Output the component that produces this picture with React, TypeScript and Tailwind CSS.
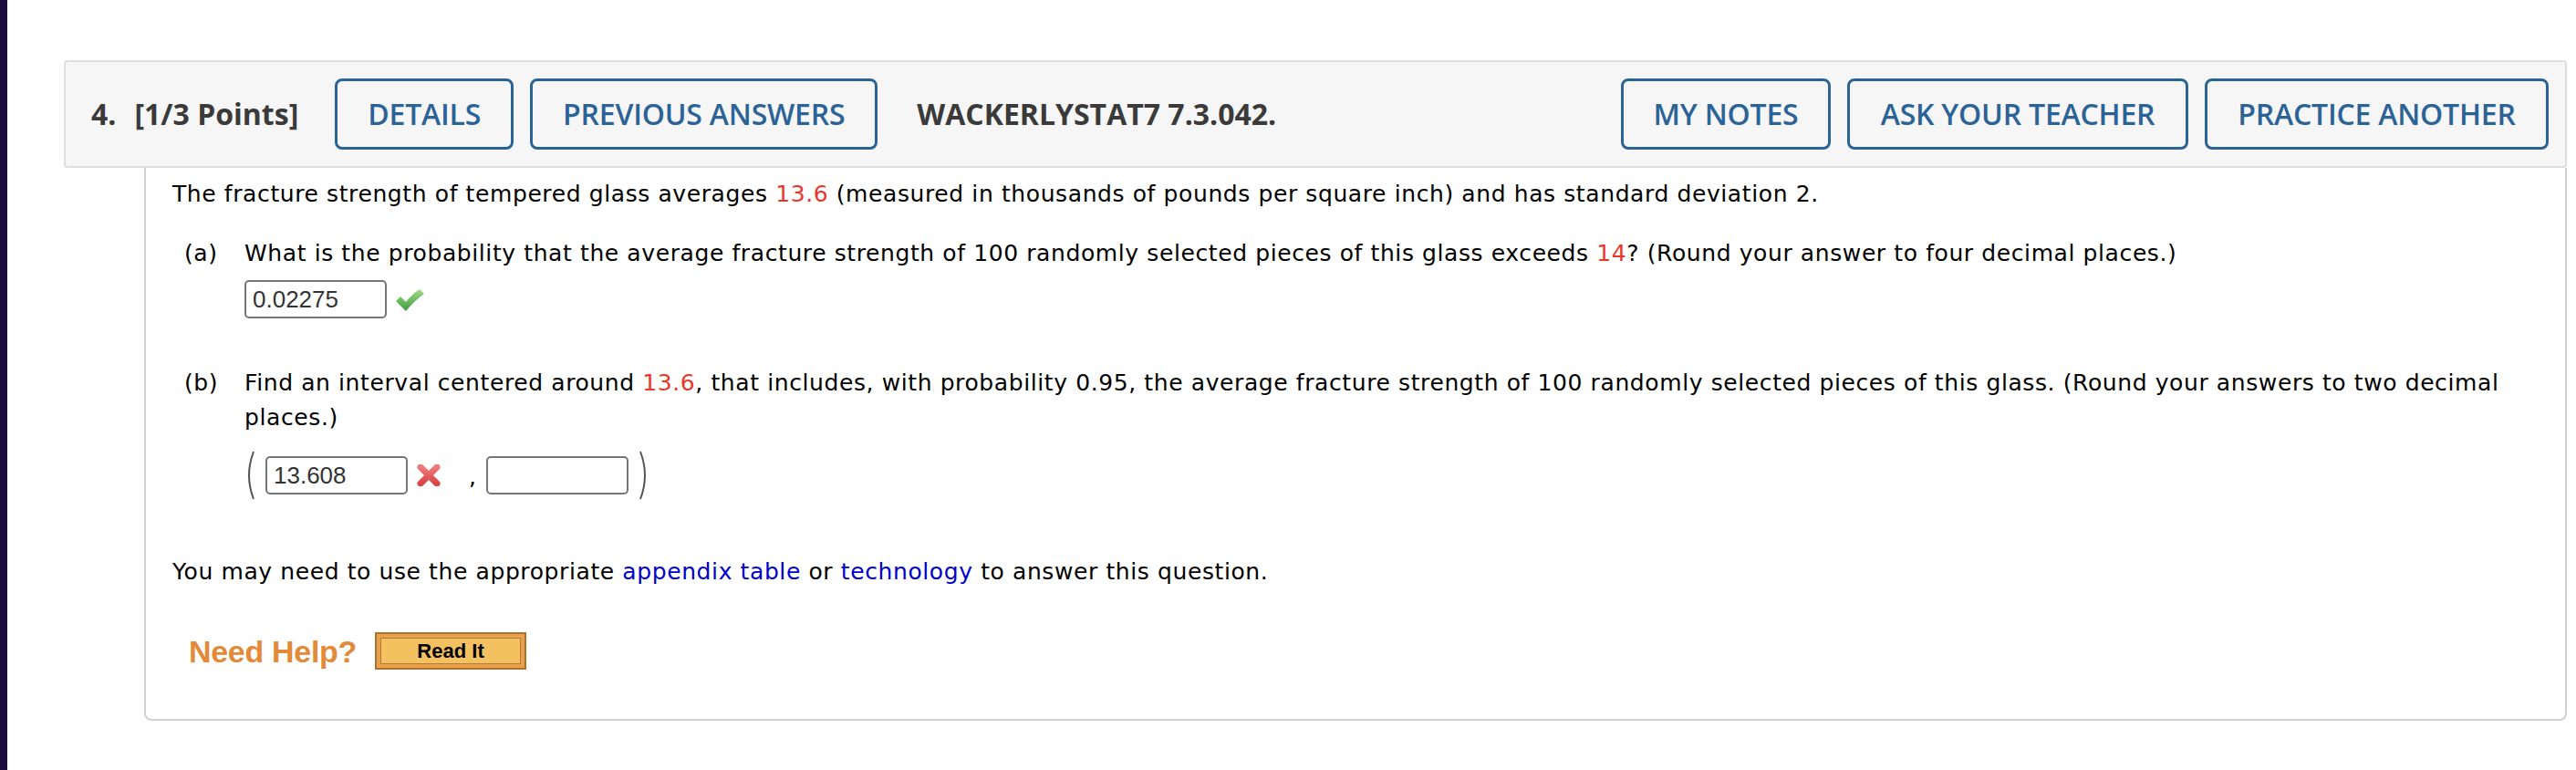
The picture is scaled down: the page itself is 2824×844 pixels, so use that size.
import React from "react";

const body = { fontFamily: '"DejaVu Sans", Verdana, sans-serif' };
const head = { fontFamily: '"Open Sans", "Liberation Sans", sans-serif' };
const arial = { fontFamily: '"Liberation Sans", Arial, sans-serif' };

function HeadButton({ label, w }: { label: string; w: string }) {
  return (
    <div
      className={`${w} h-[78px] shrink-0 border-[3px] border-[#2c6397] rounded-[8px] flex items-center justify-center text-[32px] font-semibold text-[#2c6397] tracking-[-0.2px]`}
      style={head}
    >
      {label}
    </div>
  );
}

function Check() {
  return (
    <svg width="31" height="24" viewBox="0 0 31 24">
      <defs>
        <linearGradient id="cg" x1="0" y1="0" x2="0" y2="1">
          <stop offset="0" stopColor="#9fdc86" />
          <stop offset="1" stopColor="#3f9b3c" />
        </linearGradient>
      </defs>
      <path d="M0 13 L5 8 L11 14 Q18 5 26 0 L31 5 Q20 13 11 24 Z" fill="url(#cg)" />
    </svg>
  );
}

function Cross() {
  return (
    <svg width="26" height="24" viewBox="0 0 26 24">
      <defs>
        <linearGradient id="xg" x1="0" y1="0" x2="0" y2="1">
          <stop offset="0" stopColor="#f07a7a" />
          <stop offset="1" stopColor="#d94444" />
        </linearGradient>
      </defs>
      <path d="M4 3 L22 21 M22 3 L4 21" stroke="url(#xg)" strokeWidth="7" strokeLinecap="round" fill="none" />
    </svg>
  );
}

function Paren({ right }: { right?: boolean }) {
  return (
    <svg width="13" height="56" viewBox="0 0 13 56">
      <path
        d={right ? "M3 2 Q13 28 3 54" : "M10 2 Q0 28 10 54"}
        stroke="#555555"
        strokeWidth="2"
        fill="none"
      />
    </svg>
  );
}

function Input({ value }: { value?: string }) {
  return (
    <div
      className="w-[156px] h-[42px] shrink-0 border-2 border-[#767676] rounded-[5px] bg-white flex items-center pl-[7px] text-[26px] tracking-normal text-[#333333]"
      style={arial}
    >
      {value}
    </div>
  );
}

export default function App() {
  return (
    <div className="flex w-full min-h-[844px] bg-white">
      <div className="w-[8px] shrink-0 bg-[#1b0a3c]" />
      <div className="flex-1 pl-[62px] pr-[10px] pt-[66px]">
        {/* Header */}
        <div className="h-[118px] border-2 border-[#dedede] rounded-[4px] bg-[#f6f6f6] flex items-center pl-[28px] pr-[18px]">
          <div className="flex items-center text-[32px] font-bold text-[#3a3a3a]" style={head}>
            <span>4.</span>
            <span className="ml-[20px]">[1/3 Points]</span>
          </div>
          <div className="ml-[40px] flex gap-[18px]">
            <HeadButton label="DETAILS" w="w-[196px]" />
            <HeadButton label="PREVIOUS ANSWERS" w="w-[381px]" />
          </div>
          <div className="ml-[43px] text-[32px] font-bold text-[#3a3a3a]" style={head}>
            WACKERLYSTAT7 7.3.042.
          </div>
          <div className="ml-auto flex gap-[18px]">
            <HeadButton label="MY NOTES" w="w-[230px]" />
            <HeadButton label="ASK YOUR TEACHER" w="w-[374px]" />
            <HeadButton label="PRACTICE ANOTHER" w="w-[377px]" />
          </div>
        </div>

        {/* Body */}
        <div
          className="ml-[88px] border-l-2 border-r-2 border-b-2 border-[#d0d0d0] rounded-b-[8px] pl-[29px] pr-[30px] pt-[10px] pb-[54px] text-[25px] tracking-[0.6px] leading-[38px] text-black"
          style={body}
        >
          <p>
            The fracture strength of tempered glass averages <span className="text-[#e8372a]">13.6</span> (measured in
            thousands of pounds per square inch) and has standard deviation 2.
          </p>

          <div className="flex ml-[13px] mt-[27px]">
            <div className="w-[66px] shrink-0">(a)</div>
            <div className="flex-1">
              <p>
                What is the probability that the average fracture strength of 100 randomly selected pieces of this
                glass exceeds <span className="text-[#e8372a]">14</span>? (Round your answer to four decimal places.)
              </p>
              <div className="mt-[10px] flex items-center">
                <Input value="0.02275" />
                <div className="ml-[10px] mt-[2px]">
                  <Check />
                </div>
              </div>
            </div>
          </div>

          <div className="flex ml-[13px] mt-[52px]">
            <div className="w-[66px] shrink-0">(b)</div>
            <div className="flex-1">
              <p>
                Find an interval centered around <span className="text-[#e8372a]">13.6</span>, that includes, with
                probability 0.95, the average fracture strength of 100 randomly selected pieces of this glass. (Round
                your answers to two decimal places.)
              </p>
              <div className="mt-[16px] flex items-center h-[56px]">
                <Paren />
                <div className="ml-[10px]">
                  <Input value="13.608" />
                </div>
                <div className="ml-[10px]">
                  <Cross />
                </div>
                <div className="ml-[31px] mt-[4px]">,</div>
                <div className="ml-[10px]">
                  <Input />
                </div>
                <div className="ml-[10px]">
                  <Paren right />
                </div>
              </div>
            </div>
          </div>

          <p className="mt-[59px]">
            You may need to use the appropriate <span className="text-[#0000cc]">appendix table</span> or{" "}
            <span className="text-[#0000cc]">technology</span> to answer this question.
          </p>

          <div className="mt-[47px] flex items-center h-[41px] ml-[18px] tracking-normal">
            <span className="text-[34px] font-bold text-[#e38a38] leading-none tracking-[-0.3px]" style={arial}>
              Need Help?
            </span>
            <div className="ml-[20px] w-[166px] h-[41px] border-2 border-[#a8722f] bg-[#eaa04a] p-[4px]">
              <div
                className="w-full h-full border border-[#b27b37] bg-[#f3c15f] flex items-center justify-center text-[22px] font-bold text-black leading-none"
                style={arial}
              >
                Read It
              </div>
            </div>
          </div>
        </div>
      </div>
    </div>
  );
}
